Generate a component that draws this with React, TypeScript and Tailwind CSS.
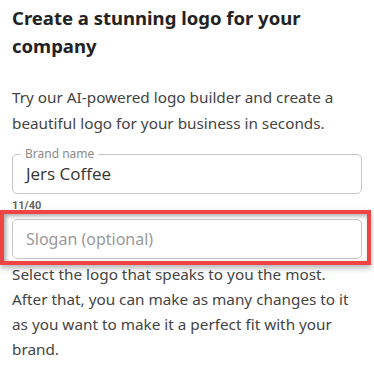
import React from 'react';

export default function App() {
  return (
    <div className="w-[374px] h-[367px] overflow-hidden bg-white px-3 text-[#333]" style={{ fontFamily: '"Noto Sans", sans-serif' }}>
      <h1 className="mt-[4px] text-[18.5px] leading-[28px] font-bold text-[#222]">
        Create a stunning logo for your company
      </h1>
      <p className="mt-[24px] text-[15.3px] leading-[26px] text-[#444]">
        Try our AI-powered logo builder and create a beautiful logo for your business in seconds.
      </p>

      {/* brand name */}
      <div className="relative mt-[18px] h-[40px] rounded-[5px] border border-[#c8c8c8]">
        <span className="absolute -top-[9px] left-[8px] bg-white px-[4px] text-[12px] leading-[16px] text-[#8a8a8a]">
          Brand name
        </span>
        <div className="flex h-full items-center pl-[13px] text-[17px] text-[#333]" style={{ fontFamily: '"Open Sans", sans-serif' }}>
          Jers Coffee
        </div>
      </div>
      <div className="mt-[5px] text-[11px] leading-[14px] font-bold text-[#666]" style={{ fontFamily: 'Roboto, sans-serif' }}>
        11/40
      </div>

      {/* slogan, highlighted */}
      <div className="relative mt-[6px]">
        <div className="flex h-[40px] items-center rounded-[5px] border border-[#c8c8c8] pl-[13px] text-[16px] text-[#9a9a9a]">
          Slogan (optional)
        </div>
        <div className="pointer-events-none absolute -top-[9px] -bottom-[6px] -left-[12px] -right-[9px] border-4 border-[#ef4444] shadow-[0_3px_6px_rgba(0,0,0,0.3),inset_2px_2px_4px_rgba(0,0,0,0.35)]" />
      </div>

      <p className="mt-[3px] text-[15.3px] leading-[25px] text-[#444]">
        Select the logo that speaks to you the most. After that, you can make as many changes to it as you want to make it a perfect fit with your brand.
      </p>
    </div>
  );
}
